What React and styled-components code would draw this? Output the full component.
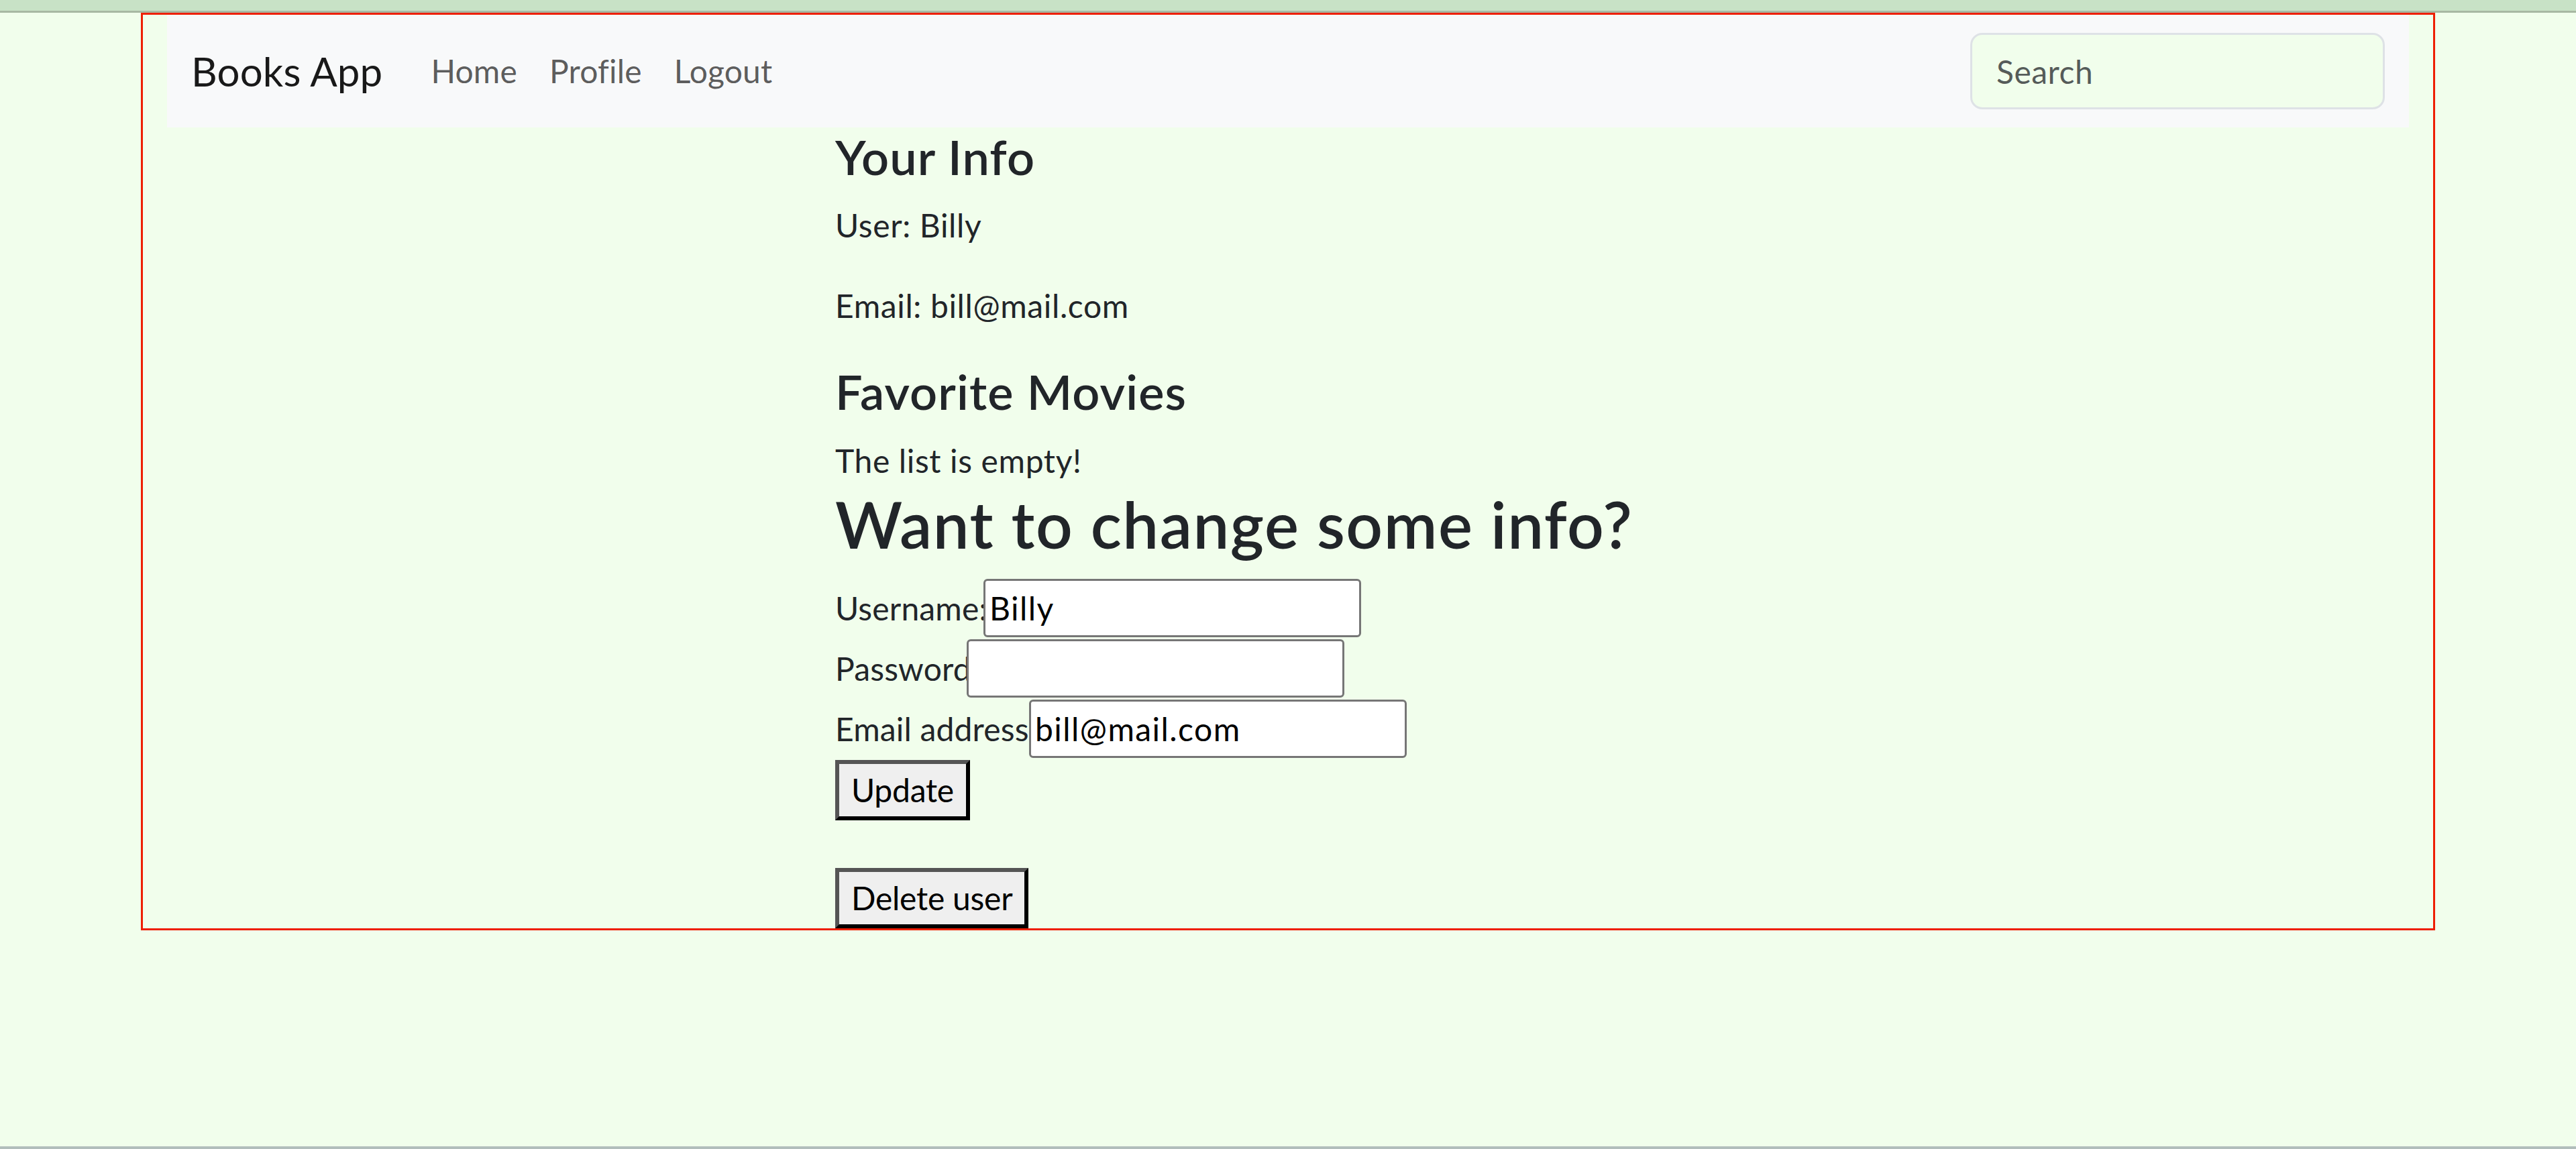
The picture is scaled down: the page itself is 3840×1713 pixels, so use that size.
import React from "react";
import styled, { createGlobalStyle } from "styled-components";

const FONT = `Lato, "Noto Sans", "Liberation Sans", sans-serif`;
const PAGE_BG = "#f1feec";

const GlobalStyle = createGlobalStyle`
  html, body {
    margin: 0;
    padding: 0;
    background: ${PAGE_BG};
  }
  body {
    font-family: ${FONT};
    color: #212529;
    letter-spacing: 0.01em;
    -webkit-font-smoothing: antialiased;
  }
  * { box-sizing: border-box; }
`;

const Page = styled.div`
  min-height: 1713px;
  display: flex;
  flex-direction: column;
  background: ${PAGE_BG};
`;

const TopStrip = styled.div`
  height: 19px;
  background: #c8e2c6;
  border-bottom: 3px solid #a8b8a3;
  flex: none;
`;

const Container = styled.div`
  width: 3420px;
  margin: 0 auto;
  border: 3px solid #ee1e00;
  padding: 0 36px;
  flex: none;
`;

const Navbar = styled.nav`
  display: flex;
  align-items: center;
  padding: 24px 36px;
  background: #f8f9fa;
`;

const Brand = styled.a`
  font-size: 60px;
  line-height: 90px;
  padding: 15px 0;
  margin-right: 48px;
  color: rgba(0, 0, 0, 0.9);
  text-decoration: none;
  white-space: nowrap;
`;

const NavList = styled.ul`
  display: flex;
  list-style: none;
  margin: 0;
  padding: 0;
`;

const NavLink = styled.a`
  display: block;
  padding: 24px;
  font-size: 48px;
  line-height: 72px;
  color: rgba(0, 0, 0, 0.65);
  text-decoration: none;
`;

const SearchForm = styled.form`
  margin-left: auto;
  display: flex;
`;

const SearchInput = styled.input`
  width: 618px;
  height: 114px;
  padding: 18px 36px;
  border: 3px solid #dee2e6;
  border-radius: 18px;
  background: ${PAGE_BG};
  font-family: ${FONT};
  font-size: 48px;
  line-height: 72px;
  letter-spacing: 0.01em;
  color: #212529;
  outline: none;
  &::placeholder {
    color: rgba(33, 37, 41, 0.75);
  }
`;

const Content = styled.main`
  width: 1350px;
  margin: 0 auto;
`;

const Heading = styled.h4`
  margin: 0 0 ${(p) => p.$mb ?? 24}px;
  font-size: ${(p) => p.$size ?? 72}px;
  line-height: 1.2;
  font-weight: 600;
  letter-spacing: 0.016em;
  color: #212529;
`;

const Text = styled.p`
  margin: 0 0 ${(p) => p.$mb ?? 48}px;
  font-size: 48px;
  line-height: 72px;
  letter-spacing: 0.013em;
`;

const FieldRow = styled.div`
  display: flex;
  align-items: baseline;
  height: 90px;
`;

const FieldLabel = styled.label`
  width: ${(p) => p.$w}px;
  flex: none;
  font-size: 48px;
  line-height: 72px;
  white-space: nowrap;
  color: #212529;
`;

const FieldInput = styled.input`
  width: 563px;
  height: 87px;
  padding: 3px 6px;
  border: 3px solid #767676;
  border-radius: 6px;
  background: #fff;
  font-family: ${FONT};
  font-size: 48px;
  line-height: 72px;
  letter-spacing: 0.03em;
  color: #000;
  outline: none;
`;

const Button = styled.button`
  display: block;
  height: 90px;
  margin: ${(p) => p.$mt ?? 0}px 0 0;
  padding: 3px 18px;
  border-style: solid;
  border-width: 6px;
  border-color: #555 #000 #000 #555;
  background: #efefef;
  font-family: ${FONT};
  font-size: 48px;
  line-height: 72px;
  letter-spacing: -0.005em;
  color: #000;
  cursor: pointer;
`;

const Spacer = styled.div`
  flex: 1;
`;

const BottomStrip = styled.div`
  height: 4px;
  background: #b2bebc;
  flex: none;
`;

export default function App() {
  return (
    <Page>
      <GlobalStyle />
      <TopStrip />
      <Container>
        <Navbar>
          <Brand href="#">Books App</Brand>
          <NavList>
            <li><NavLink href="#">Home</NavLink></li>
            <li><NavLink href="#">Profile</NavLink></li>
            <li><NavLink href="#">Logout</NavLink></li>
          </NavList>
          <SearchForm onSubmit={(e) => e.preventDefault()}>
            <SearchInput type="search" placeholder="Search" aria-label="Search" />
          </SearchForm>
        </Navbar>
        <Content>
          <Heading>Your Info</Heading>
          <Text>User: Billy</Text>
          <Text>Email: bill@mail.com</Text>
          <Heading>Favorite Movies</Heading>
          <Text $mb={0}>The list is empty!</Text>
          <Heading as="h2" $size={96} $mb={25}>Want to change some info?</Heading>
          <FieldRow>
            <FieldLabel $w={221}>Username:</FieldLabel>
            <FieldInput type="text" defaultValue="Billy" />
          </FieldRow>
          <FieldRow>
            <FieldLabel $w={196}>Password</FieldLabel>
            <FieldInput type="password" defaultValue="" />
          </FieldRow>
          <FieldRow>
            <FieldLabel $w={289}>Email address</FieldLabel>
            <FieldInput type="email" defaultValue="bill@mail.com" />
          </FieldRow>
          <Button type="button">Update</Button>
          <Button type="button" $mt={71}>Delete user</Button>
        </Content>
      </Container>
      <Spacer />
      <BottomStrip />
    </Page>
  );
}
